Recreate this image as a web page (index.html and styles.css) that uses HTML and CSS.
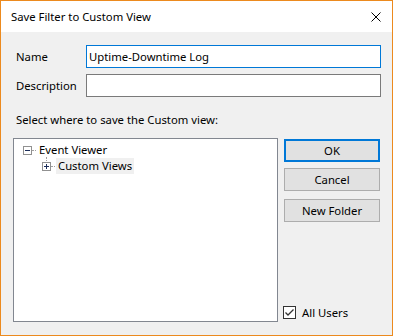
FILE: index.html
```html
<!DOCTYPE html>
<html lang="en">
<head>
  <meta charset="UTF-8">
  <title>Save Filter to Custom View</title>
  <link rel="stylesheet" href="styles.css">
</head>
<body>
  <div class="window">
    <div class="titlebar">
      <span class="title">Save Filter to Custom View</span>
      <svg class="close" width="10" height="10" viewBox="0 0 10 10">
        <path d="M0.5 0.5 L9.5 9.5 M9.5 0.5 L0.5 9.5" stroke="#000" stroke-width="1" fill="none"/>
      </svg>
    </div>

    <div class="content">
      <div class="field">
        <label class="field-label">Name</label>
        <input type="text" class="field-input focused" value="Uptime-Downtime Log">
      </div>
      <div class="field">
        <label class="field-label">Description</label>
        <input type="text" class="field-input" value="">
      </div>

      <div class="hint">Select where to save the Custom view:</div>

      <div class="lower">
        <div class="tree">
          <div class="tree-row">
            <span class="expander minus"></span>
            <span class="dots"></span>
            <span class="node">Event Viewer</span>
          </div>
          <div class="tree-row child">
            <span class="expander plus"></span>
            <span class="dots"></span>
            <span class="node selected">Custom Views</span>
          </div>
        </div>

        <div class="side">
          <button class="btn default">OK</button>
          <button class="btn">Cancel</button>
          <button class="btn spaced">New Folder</button>
          <div class="spacer"></div>
          <label class="check">
            <span class="box">
              <svg width="11" height="11" viewBox="0 0 11 11">
                <path d="M1.5 5.5 L4 8 L9.5 2.5" stroke="#333" stroke-width="1.3" fill="none"/>
              </svg>
            </span>
            All Users
          </label>
        </div>
      </div>
    </div>
  </div>
</body>
</html>
```

FILE: styles.css
```css
* {
  box-sizing: border-box;
}

body {
  margin: 0;
  padding: 0;
  font-family: 'Noto Sans', 'Liberation Sans', sans-serif;
  font-size: 11.3px;
  color: #000;
}

.window {
  width: 393px;
  height: 336px;
  border: 1px solid #ec8a1e;
  background: #f0f0f0;
  display: flex;
  flex-direction: column;
}

.titlebar {
  height: 31px;
  background: #fff;
  display: flex;
  align-items: center;
  justify-content: space-between;
  padding: 0 10px 0 10px;
}

.close {
  display: block;
  margin-right: 1px;
}

.content {
  flex: 1;
  display: flex;
  flex-direction: column;
  padding: 13px 11px 13px 12px;
}

.field {
  display: flex;
  align-items: center;
  margin-bottom: 6px;
}

.field-label {
  width: 73px;
  padding-left: 3px;
}

.field-input {
  flex: 1;
  height: 23px;
  border: 1px solid #7a7a7a;
  background: #fff;
  font-family: inherit;
  font-size: 11.3px;
  padding: 0 2px;
  outline: none;
}

.field-input.focused {
  border-color: #0078d7;
}

.hint {
  margin-top: 9px;
  padding-left: 3px;
  line-height: 16px;
  height: 16px;
}

.lower {
  flex: 1;
  display: flex;
  margin-top: 10px;
}

.tree {
  flex: 1;
  background: #fff;
  border: 1px solid #828790;
  padding: 3px 0 0 9px;
}

.tree-row {
  display: flex;
  align-items: center;
  height: 16px;
}

.tree-row.child {
  padding-left: 19px;
  position: relative;
}

.tree-row.child::before {
  content: '';
  position: absolute;
  left: 23px;
  top: -1px;
  height: 6px;
  border-left: 1px dotted #a0a0a0;
}

.expander {
  width: 9px;
  height: 9px;
  border: 1px solid #919191;
  background: #fff;
  position: relative;
  flex: none;
}

.expander::before {
  content: '';
  position: absolute;
  left: 1px;
  top: 3px;
  width: 5px;
  height: 1px;
  background: #1c2e5a;
}

.expander.plus::after {
  content: '';
  position: absolute;
  left: 3px;
  top: 1px;
  width: 1px;
  height: 5px;
  background: #1c2e5a;
}

.dots {
  width: 4px;
  border-top: 1px dotted #a0a0a0;
  margin: 0 1px 0 0;
}

.node {
  padding: 0 2px;
  line-height: 16px;
}

.node.selected {
  background: #f0f0f0;
}

.side {
  width: 96px;
  margin-left: 6px;
  margin-right: 1px;
  display: flex;
  flex-direction: column;
}

.btn {
  height: 23px;
  margin-top: 1px;
  margin-bottom: 5px;
  background: #e1e1e1;
  border: 1px solid #adadad;
  font-family: inherit;
  font-size: 11.3px;
  color: #000;
  padding: 0;
}

.btn.default {
  border: 2px solid #0078d7;
}

.btn.spaced {
  margin-top: 3px;
}

.spacer {
  flex: 1;
}

.check {
  display: flex;
  align-items: center;
  gap: 6px;
  height: 13px;
  margin-left: -1px;
  margin-bottom: 3px;
}

.box {
  width: 13px;
  height: 13px;
  border: 1px solid #333;
  background: #fff;
  display: flex;
  align-items: center;
  justify-content: center;
}
```
